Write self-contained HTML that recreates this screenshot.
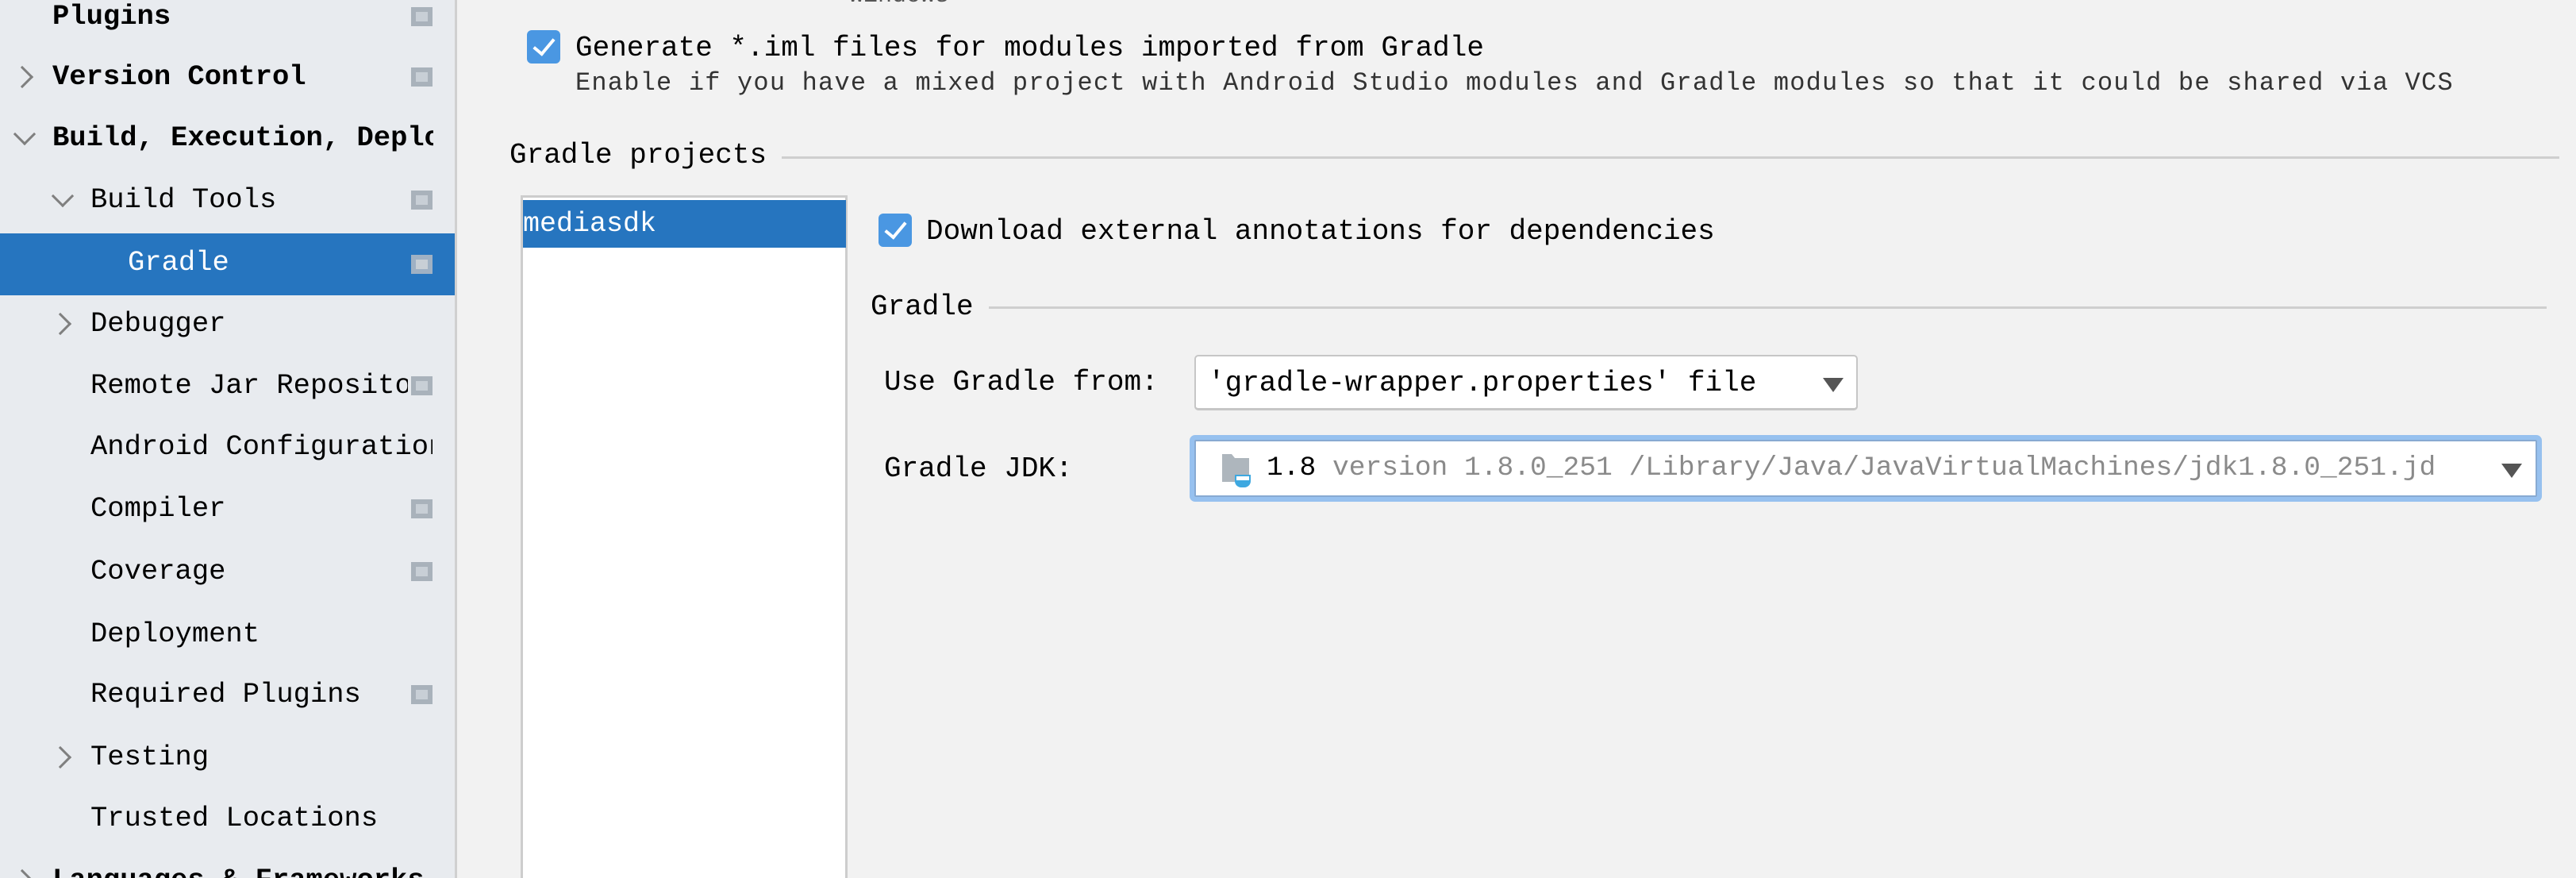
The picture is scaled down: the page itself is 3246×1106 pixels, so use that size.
<!DOCTYPE html>
<html><head><meta charset="utf-8"><style>
*{margin:0;padding:0;box-sizing:border-box}
html,body{width:3246px;height:1106px;overflow:hidden}
body{background:#f2f2f2;font-family:"Liberation Mono",monospace;position:relative;color:#000}
.sb{position:absolute;left:0;top:0;width:576px;height:1106px;background:#e8ebef;border-right:3px solid #d0d0d0}
.r{position:absolute;left:0;width:573px;height:78px;font-size:35.5px;line-height:78px;white-space:nowrap;overflow:hidden}
.r span{position:absolute;display:block;overflow:hidden}
.b{font-weight:bold}
.sel{background:#2675bf;color:#fff}
.ic{position:absolute;left:518px;top:27px;width:27px;height:24px;background:#a9b2bb}
.ic:after{content:"";position:absolute;left:6px;top:6px;width:15px;height:12px;background:#c8cfd6}
.sel .ic{background:#9fb1c4}
.chev{position:absolute;width:20px;height:20px;border-right:3px solid #7f7f7f;border-bottom:3px solid #7f7f7f}
.t{position:absolute;white-space:nowrap;font-size:36px}
.cb{position:absolute;width:42px;height:42px;background:#4a97e2;border-radius:6px}
.cb:after{content:"";position:absolute;left:14px;top:5px;width:11px;height:22px;border-right:4px solid #fff;border-bottom:4px solid #fff;transform:rotate(40deg)}
.ln{position:absolute;height:3px;background:#cfcfcf}
</style></head><body>
<div class="sb">
 <div class="r b" style="top:-18px"><span style="left:66px">Plugins</span><div class="ic"></div></div>
 <div class="r b" style="top:58px"><div class="chev" style="left:18px;top:29px;transform:rotate(-45deg)"></div><span style="left:66px">Version Control</span><div class="ic"></div></div>
 <div class="r b" style="top:135px"><div class="chev" style="left:21px;top:24px;transform:rotate(45deg)"></div><span style="left:66px;width:480px">Build, Execution, Deployment</span></div>
 <div class="r" style="top:213px"><div class="chev" style="left:69px;top:24px;transform:rotate(45deg)"></div><span style="left:114px">Build Tools</span><div class="ic"></div></div>
 <div class="r sel" style="top:294px"><span style="left:161px;top:-2px">Gradle</span><div class="ic"></div></div>
 <div class="r" style="top:369px"><div class="chev" style="left:66px;top:29px;transform:rotate(-45deg)"></div><span style="left:114px">Debugger</span></div>
 <div class="r" style="top:447px"><span style="left:114px;width:400px">Remote Jar Repositories</span><div class="ic"></div></div>
 <div class="r" style="top:524px"><span style="left:114px;width:431px">Android Configuration</span></div>
 <div class="r" style="top:602px"><span style="left:114px">Compiler</span><div class="ic"></div></div>
 <div class="r" style="top:681px"><span style="left:114px">Coverage</span><div class="ic"></div></div>
 <div class="r" style="top:760px"><span style="left:114px">Deployment</span></div>
 <div class="r" style="top:836px"><span style="left:114px">Required Plugins</span><div class="ic"></div></div>
 <div class="r" style="top:915px"><div class="chev" style="left:66px;top:29px;transform:rotate(-45deg)"></div><span style="left:114px">Testing</span></div>
 <div class="r" style="top:992px"><span style="left:114px">Trusted Locations</span></div>
 <div class="r b" style="top:1070px"><div class="chev" style="left:18px;top:29px;transform:rotate(-45deg)"></div><span style="left:66px">Languages &amp; Frameworks</span></div>
</div>

<div class="t" style="left:1070px;top:-22px;color:#555;font-size:30px">Windows</div>
<div class="cb" style="left:664px;top:38px"></div>
<div class="t" style="left:725px;top:40px">Generate *.iml files for modules imported from Gradle</div>
<div class="t" style="left:725px;top:86px;color:#333;font-size:32px;letter-spacing:1.2px">Enable if you have a mixed project with Android Studio modules and Gradle modules so that it could be shared via VCS</div>

<div class="t" style="left:642px;top:175px">Gradle projects</div>
<div class="ln" style="left:985px;width:2240px;top:197px"></div>

<div style="position:absolute;left:656px;top:246px;width:412px;height:870px;background:#fff;border:3px solid #cdcdcd;border-bottom:none"></div>
<div style="position:absolute;left:659px;top:252px;width:407px;height:60px;background:#2675bf"></div>
<div class="t" style="left:659px;top:262px;color:#fff;font-size:35px">mediasdk</div>

<div class="cb" style="left:1107px;top:269px"></div>
<div class="t" style="left:1167px;top:271px">Download external annotations for dependencies</div>

<div class="t" style="left:1097px;top:366px">Gradle</div>
<div class="ln" style="left:1246px;width:1963px;top:386px"></div>

<div class="t" style="left:1114px;top:461px">Use Gradle from:</div>
<div style="position:absolute;left:1505px;top:447px;width:836px;height:70px;background:#fff;border:2px solid #c6c6c6;border-bottom-width:3px;border-radius:5px"></div>
<div class="t" style="left:1522px;top:462px">'gradle-wrapper.properties' file</div>
<div style="position:absolute;left:2297px;top:476px;border-left:13px solid transparent;border-right:13px solid transparent;border-top:18px solid #555"></div>

<div class="t" style="left:1114px;top:570px">Gradle JDK:</div>
<div style="position:absolute;left:1499px;top:548px;width:1704px;height:84px;background:#fff;border:6px solid #97c1ef;border-radius:7px;box-shadow:inset 0 0 0 2px #88aad2"></div>
<svg style="position:absolute;left:1538px;top:570px" width="50" height="46" viewBox="0 0 50 46"><path d="M2 2h12l4 5h18v30H2z" fill="#aeb6bd"/><path d="M18 28h20v8a8 8 0 0 1-8 8h-4a8 8 0 0 1-8-8z" fill="#3ea8e0"/><path d="M20 30h16v5H20z" fill="#fff"/></svg>
<div class="t" style="left:1596px;top:570px;font-size:34.6px">1.8 <span style="color:#8a8a8a">version 1.8.0_251 /Library/Java/JavaVirtualMachines/jdk1.8.0_251.jd</span></div>
<div style="position:absolute;left:3152px;top:584px;border-left:13px solid transparent;border-right:13px solid transparent;border-top:18px solid #555"></div>
</body></html>
